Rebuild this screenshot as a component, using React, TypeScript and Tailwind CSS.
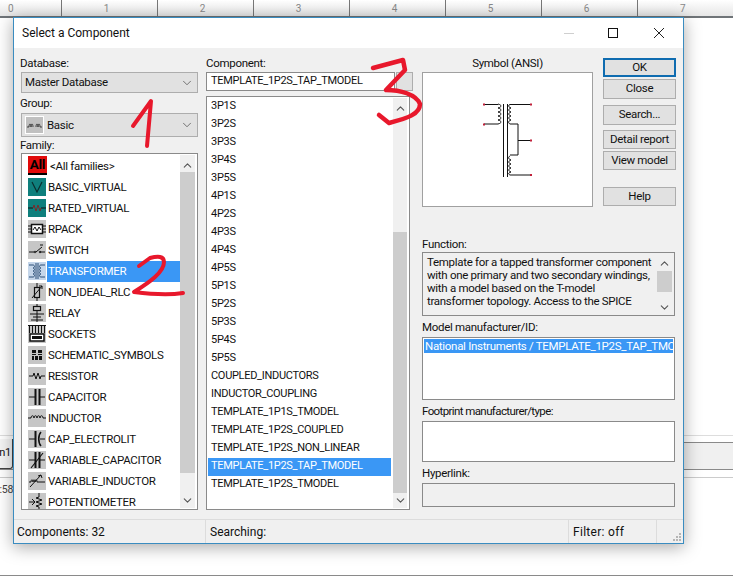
import React from "react";
import { ChevronDown, ChevronUp } from "lucide-react";

const S = { fontFamily: 'Roboto, "Noto Sans", sans-serif' };

function Scroll({ w = 15, thumbTop, thumbH, h }: { w?: number; thumbTop: number; thumbH: number; h: number }) {
  return (
    <div className="relative shrink-0 bg-[#f0f0f0]" style={{ width: w, height: h }}>
      <div className="absolute left-0 top-[3px] flex h-[14px] w-full items-center justify-center">
        <ChevronUp size={13} strokeWidth={2} className="text-[#555555]" />
      </div>
      <div className="absolute left-0 w-full bg-[#cdcdcd]" style={{ top: thumbTop, height: thumbH }} />
      <div className="absolute bottom-[1px] left-0 flex h-[14px] w-full items-center justify-center">
        <ChevronDown size={13} strokeWidth={2} className="text-[#555555]" />
      </div>
    </div>
  );
}

const st = { fill: "none", stroke: "#111", strokeWidth: 1 };

const Ico: Record<string, React.ReactNode> = {
  basicV: <path d="M4 4 L9 14 L14 4" fill="none" stroke="#0a2f2f" strokeWidth="1.2" />,
  rated: (
    <g fill="none" strokeWidth="1">
      <path d="M0 9 H5 M13 9 H18" stroke="#111" />
      <path d="M5 9 L6 6 L8 12 L10 6 L12 12 L13 9" stroke="#7a2a2a" />
    </g>
  ),
  rpack: (
    <g {...st}>
      <rect x="3.5" y="4.5" width="11" height="9" fill="#fff" strokeWidth="1.5" />
      <path d="M0 6 H3 M0 9 H3 M0 12 H3 M15 6 H18 M15 9 H18 M15 12 H18" />
      <path d="M5 10 L7 7 L9 11 L11 7 L13 10" />
    </g>
  ),
  sw: (
    <g {...st}>
      <path d="M1 11 H6 M12 11 H17 M8 11 L14 6 M12 4 H15" />
      <circle cx="7" cy="11" r="0.8" />
      <circle cx="12" cy="11" r="0.8" />
    </g>
  ),
  trans: (
    <g fill="none" stroke="#2c4f77" strokeWidth="1">
      <path d="M8 1 V17 M10 1 V17" />
      <path d="M1 3 H5 C7 3 7 6 5 6 C7 6 7 9 5 9 C7 9 7 12 5 12 C7 12 7 15 5 15 H1" />
      <path d="M17 3 H13 C11 3 11 6 13 6 C11 6 11 9 13 9 M13 9 C11 9 11 12 13 12 C11 12 11 15 13 15 H17" />
    </g>
  ),
  nonideal: (
    <g {...st}>
      <path d="M9 0 V4 M9 14 V18" />
      <rect x="6.5" y="4.5" width="5" height="10" strokeWidth="1.2" />
      <path d="M4 15 L14 3 M11 3 H14 V6" />
    </g>
  ),
  relay: (
    <g {...st}>
      <rect x="5.5" y="2.5" width="7" height="4" strokeWidth="1.2" />
      <path d="M9 0 V2 M9 7 V10 M2 10 H16 M5 13 H13 M9 10 V18 M3 16 H15" />
    </g>
  ),
  sockets: (
    <g fill="#111">
      <path d="M0 0 H18 V1 H0 Z" />
      <path d="M1 1 h1 v7 h-1 z M4 1 h1 v7 h-1 z M7 1 h1 v7 h-1 z M10 1 h1 v7 h-1 z M13 1 h1 v7 h-1 z M16 1 h1 v7 h-1 z" />
      <rect x="2" y="9" width="14" height="7" fill="#fff" stroke="#111" strokeWidth="1.5" />
      <rect x="4" y="11" width="10" height="3" />
    </g>
  ),
  schem: (
    <g fill="#111">
      <rect x="4" y="4" width="4" height="3" />
      <rect x="10" y="4" width="4" height="3" />
      <rect x="4" y="8" width="4" height="1" />
      <rect x="10" y="8" width="4" height="1" />
      <rect x="4" y="10" width="2" height="4" />
      <rect x="7" y="10" width="3" height="4" />
      <rect x="11" y="10" width="3" height="4" />
    </g>
  ),
  res: <path d="M1 9 H5 L6 6 L8 12 L10 6 L12 12 L13 9 H17" {...st} />,
  cap: (
    <g fill="none" stroke="#111">
      <path d="M1 9 H7 M11 9 H17" />
      <path d="M7.5 1 V17 M11.5 1 V17" strokeWidth="2" />
    </g>
  ),
  ind: <path d="M0 9 H3 C3 6 6 6 6 9 C6 6 9 6 9 9 C9 6 12 6 12 9 C12 6 15 6 15 9 H18" {...st} />,
  cape: (
    <g fill="none" stroke="#111">
      <path d="M1 9 H7 M12 9 H17" />
      <path d="M7.5 1 V17" strokeWidth="2" />
      <path d="M13 2 C10 5 10 13 13 16" strokeWidth="1.6" />
    </g>
  ),
  varc: (
    <g fill="none" stroke="#111">
      <path d="M1 9 H7 M11 9 H17" />
      <path d="M7.5 1 V17 M11.5 1 V17" strokeWidth="2" />
      <path d="M3 17 L15 2" strokeWidth="1.2" />
    </g>
  ),
  vari: (
    <g {...st}>
      <path d="M1 10 H3 C3 7 5 7 5 10 C5 7 7 7 7 10 C7 7 9 7 9 10 H17" />
      <path d="M2 15 L13 3 M10 4 L13 3 L14 6" />
    </g>
  ),
  pot: (
    <g {...st}>
      <path d="M11 0 V4 L8 5 L14 7 L8 9 L14 11 L8 13 L11 14 V18" />
      <path d="M1 9 H7 M4 6 L7 9 L4 12" />
    </g>
  ),
};

const families: [string, string, string?][] = [
  ["BASIC_VIRTUAL", "basicV", "teal"],
  ["RATED_VIRTUAL", "rated", "teal"],
  ["RPACK", "rpack"],
  ["SWITCH", "sw"],
  ["TRANSFORMER", "trans", "sel"],
  ["NON_IDEAL_RLC", "nonideal"],
  ["RELAY", "relay"],
  ["SOCKETS", "sockets"],
  ["SCHEMATIC_SYMBOLS", "schem"],
  ["RESISTOR", "res"],
  ["CAPACITOR", "cap"],
  ["INDUCTOR", "ind"],
  ["CAP_ELECTROLIT", "cape"],
  ["VARIABLE_CAPACITOR", "varc"],
  ["VARIABLE_INDUCTOR", "vari"],
  ["POTENTIOMETER", "pot"],
];

const components = [
  "3P1S", "3P2S", "3P3S", "3P4S", "3P5S", "4P1S", "4P2S", "4P3S", "4P4S", "4P5S",
  "5P1S", "5P2S", "5P3S", "5P4S", "5P5S", "COUPLED_INDUCTORS", "INDUCTOR_COUPLING",
  "TEMPLATE_1P1S_TMODEL", "TEMPLATE_1P2S_COUPLED", "TEMPLATE_1P2S_NON_LINEAR",
  "TEMPLATE_1P2S_TAP_TMODEL", "TEMPLATE_1P2S_TMODEL",
];

function Btn({ children, h, mt, ok }: { children: React.ReactNode; h: number; mt: number; ok?: boolean }) {
  return (
    <div
      className={
        "flex w-[73px] items-center justify-center whitespace-nowrap bg-[#e1e1e1] text-[11.5px] text-[#111] " +
        (ok ? "border-2 border-[#0f6cb0]" : "border border-[#adadad]")
      }
      style={{ height: h, marginTop: mt }}
    >
      {children}
    </div>
  );
}

function Lab({ children, h, low }: { children: React.ReactNode; h: number; low?: boolean }) {
  return (
    <div
      className={"flex items-center whitespace-nowrap text-[11.5px] leading-none text-[#111] " + (low ? "pt-[3px]" : "pt-[1px]")}
      style={{ height: h }}
    >
      {children}
    </div>
  );
}

function Ruler() {
  return (
    <div className="flex h-[16px] bg-gradient-to-b from-white to-[#e6e6e6] tracking-normal">
      <div className="flex h-full w-[62px] shrink-0 items-center border-r border-[#777] pl-[8px] text-[10px] text-[#888]">0</div>
      {["1", "2", "3", "4", "5", "6"].map((d) => (
        <div key={d} className="flex h-full w-[96px] shrink-0 items-center justify-center border-r border-[#777] pr-[6px] text-[10px] text-[#888]">
          {d}
        </div>
      ))}
      <div className="flex h-full flex-1 items-center pl-[42px] text-[10px] text-[#888]">7</div>
    </div>
  );
}

const fnLines = [
  "Template for a tapped transformer component",
  "with one primary and two secondary windings,",
  "with a model based on the T-model",
  "transformer topology. Access to the SPICE",
];

export default function App() {
  return (
    <div className="relative h-[577px] w-[733px] overflow-hidden bg-white tracking-[-0.3px]" style={S}>
      <Ruler />
      <div className="h-[2px] bg-[#6f7478]" />
      <div className="mt-[417px] h-px bg-[#dddddd]" />
      <div className="mt-[6px] flex h-[28px] border-y border-[#8a8a8a] bg-[#f0f0f0]">
        <div className="-mt-[4px] flex h-[30px] w-[13px] items-center justify-end rounded-br-[3px] border-r border-b border-[#444] bg-[#f5f5f5] pr-[1px] text-[11px] text-[#111]">
          n1
        </div>
      </div>
      <div className="mt-[7px] h-px bg-[#cccccc]" />
      <div className="mt-[4px] flex h-[16px] w-[13px] items-center justify-end text-[10.5px] text-[#444]">:58</div>
      <div className="mt-[77px] h-px bg-[#8a8a8a]" />

      {/* dialog */}
      <div className="absolute left-[13px] top-[17px] flex h-[527px] w-[671px] flex-col border border-[#3a8cc0] bg-[#f0f0f0] shadow-[0_3px_16px_rgba(0,0,0,0.35)]">
        <div className="flex h-[30px] shrink-0 items-center bg-white pl-[8px] text-[12px] tracking-normal text-[#111]">
          <span className="flex-1">Select a Component</span>
          <div className="mr-[34px] h-px w-[10px] bg-[#cfcfcf]" />
          <div className="mr-[35px] h-[10px] w-[10px] border border-[#111]" />
          <svg width="12" height="12" viewBox="0 0 12 12" className="mr-[18px]">
            <path d="M1 1 L11 11 M11 1 L1 11" stroke="#222" strokeWidth="1" />
          </svg>
        </div>

        <div className="flex flex-1 pl-[6px] pt-[7px]">
          {/* left */}
          <div className="flex w-[178px] shrink-0 flex-col">
            <Lab h={17}>Database:</Lab>
            <div className="ml-[1px] flex h-[21px] items-center justify-between border border-[#adadad] bg-[#e1e1e1] pl-[3px] pr-[3px] pt-[1px] text-[11.5px] text-[#111]">
              Master Database
              <ChevronDown size={14} strokeWidth={1.2} className="text-[#444]" />
            </div>
            <Lab h={20}>Group:</Lab>
            <div className="ml-[1px] flex h-[24px] items-center border border-[#adadad] bg-[#e1e1e1] pl-[3px] pr-[3px] text-[11.5px] text-[#111]">
              <div className="mr-[3px] flex h-[18px] w-[19px] items-center justify-center border border-white bg-[#c0c0c0]">
                <svg width="15" height="10" viewBox="0 0 15 10">
                  <path d="M0 7 H2 C2 3 4 3 4 7 C4 3 6 3 6 7 M9 7 C9 3 11 3 11 7 C11 3 13 3 13 7 H15" fill="none" stroke="#222" strokeWidth="0.8" />
                </svg>
              </div>
              <span className="flex-1 pt-[2px]">Basic</span>
              <ChevronDown size={14} strokeWidth={1.2} className="text-[#444]" />
            </div>
            <Lab h={16}>Family:</Lab>
            <div className="ml-[1px] flex h-[357px] overflow-hidden border border-[#8a8a8a] bg-white pt-px">
              <div className="h-full w-[158px] shrink-0 overflow-hidden pl-[6px] pt-px">
                <div className="flex h-[21px] items-start text-[11.5px] text-[#111]">
                  <div className="h-[19px] w-[19px] shrink-0 border-b-2 border-black bg-[#e10a0a] text-center text-[13.5px] font-bold leading-[17px] text-black">
                    All
                  </div>
                  <span className="ml-[3px] mt-[1px] leading-[18px]">&lt;All families&gt;</span>
                </div>
                {families.map(([name, ic, kind]) => (
                  <div key={name} className="flex h-[21px] items-start text-[11.5px]">
                    <div className={"mt-px h-[18px] w-[18px] shrink-0 " + (kind === "teal" ? "bg-[#0f7f7c]" : kind === "sel" ? "bg-[#c5d6ea]" : "bg-[#c6c6c6]")}>
                      <svg width="18" height="18" viewBox="0 0 18 18">{Ico[ic]}</svg>
                    </div>
                    <div className={"ml-px flex h-[21px] flex-1 items-center pl-[1px] " + (kind === "sel" ? "bg-[#3a97f5] text-white" : "text-[#111]")}>
                      {name}
                    </div>
                  </div>
                ))}
              </div>
              <Scroll thumbTop={17} thumbH={301} h={353} />
            </div>
          </div>

          {/* middle */}
          <div className="ml-[8px] flex w-[207px] shrink-0 flex-col">
            <Lab h={17}>Component:</Lab>
            <div className="flex h-[19px] gap-px">
              <div className="flex h-full w-[189px] items-center border border-[#8a8a8a] bg-white pl-[4px] text-[11px] text-[#111]">
                TEMPLATE_1P2S_TAP_TMODEL
              </div>
              <div className="h-full w-[17px] border border-[#adadad] bg-[#e1e1e1]" />
            </div>
            <div className="mt-[5px] flex h-[414px] w-[204px] overflow-hidden border border-[#8a8a8a] bg-white pl-px pt-px">
              <div className="h-full w-[183px] shrink-0 overflow-hidden">
                {components.map((c) => (
                  <div
                    key={c}
                    className={
                      "flex h-[18px] items-center pb-[1px] pl-[3px] text-[11px] " +
                      (c === "TEMPLATE_1P2S_TAP_TMODEL" ? "bg-[#3a97f5] text-white" : "text-[#111]")
                    }
                  >
                    {c}
                  </div>
                ))}
              </div>
              <div className="ml-[2px]">
                <Scroll w={14} thumbTop={134} thumbH={261} h={410} />
              </div>
            </div>
          </div>

          {/* right */}
          <div className="ml-[9px] flex w-[254px] shrink-0 flex-col">
            <div className="flex h-[181px] shrink-0">
              <div className="flex w-[171px] shrink-0 flex-col">
                <div className="flex h-[17px] items-center justify-center pt-[1px] text-[11.5px] leading-none text-[#111]">Symbol (ANSI)</div>
                <div className="h-[135px] border border-[#a0a0a0] bg-white">
                  <svg width="169" height="133" viewBox="423 73 169 133">
                    <g fill="none" stroke="#111" strokeWidth="1">
                      <path d="M503.5 104 V177 M507.5 104 V177" />
                      <path d="M484 104.5 H498 M498 104 C502 105 502 107 498 108 C502 109 502 111 498 112 C502 113 502 115 498 116 C502 117 502 119 498 120 C502 121 502 123 498 124 H484" />
                      <path d="M531 104.5 H510 C508 105 508 107 511 108 C508 109 508 111 511 112 C508 113 508 115 511 116 C508 117 508 119 511 120 C508 121 508 123 510 124 H518 V155 H510" />
                      <path d="M518 140.5 H531" />
                      <path d="M510 156 C508 157 508 159 511 160 C508 161 508 163 511 164 C508 165 508 167 511 168 C508 169 508 171 511 172 C508 173 508 174 510 175 H531" />
                    </g>
                    <g fill="#c0203a">
                      <rect x="483" y="103.5" width="2" height="2" />
                      <rect x="483" y="123.5" width="2" height="2" />
                      <rect x="530" y="103.5" width="2" height="2" />
                      <rect x="530" y="139.5" width="2" height="2" />
                      <rect x="530" y="174" width="2" height="2" />
                    </g>
                  </svg>
                </div>
              </div>
              <div className="ml-[10px] flex flex-col">
                <Btn ok h={19} mt={3}>OK</Btn>
                <Btn h={20} mt={2}>Close</Btn>
                <Btn h={20} mt={6}>Search...</Btn>
                <Btn h={19} mt={5}>Detail report</Btn>
                <Btn h={19} mt={2}>View model</Btn>
                <Btn h={19} mt={17}>Help</Btn>
              </div>
            </div>
            <Lab h={16}>Function:</Lab>
            <div className="flex h-[64px] w-[253px] border border-[#8a8a8a] bg-[#f0f0f0]">
              <div className="w-[234px] whitespace-nowrap pl-[4px] pt-[3px] text-[11.5px] leading-[13px] text-[#111]">
                {fnLines.map((l) => (
                  <div key={l}>{l}</div>
                ))}
              </div>
              <Scroll thumbTop={18} thumbH={21} h={62} />
            </div>
            <Lab h={21} low>Model manufacturer/ID:</Lab>
            <div className="h-[63px] w-[253px] overflow-hidden border border-[#8a8a8a] bg-white p-px">
              <div className="h-[14px] overflow-hidden whitespace-nowrap bg-[#3a97f5] pl-px text-[11.5px] leading-[14px] text-white">
                National Instruments / TEMPLATE_1P2S_TAP_TMODEL
              </div>
            </div>
            <Lab h={21} low>
              <span className="tracking-[-0.6px]">Footprint manufacturer/type:</span>
            </Lab>
            <div className="h-[41px] w-[253px] border border-[#8a8a8a] bg-white" />
            <Lab h={21} low>Hyperlink:</Lab>
            <div className="h-[24px] w-[253px] border border-[#8a8a8a] bg-[#f0f0f0]" />
          </div>
        </div>

        {/* status */}
        <div className="flex h-[24px] shrink-0 items-center border-t border-[#dcdcdc] text-[12px] tracking-normal text-[#111]">
          <div className="flex h-full w-[192px] items-center border-r border-[#dcdcdc] pl-[3px]">Components: 32</div>
          <div className="flex h-full w-[363px] items-center border-r border-[#dcdcdc] pl-[4px]">Searching:</div>
          <div className="flex h-full w-[88px] items-center border-r border-[#dcdcdc] pl-[4px] tracking-[0.3px]">Filter: off</div>
          <svg width="12" height="12" viewBox="0 0 12 12" className="ml-auto mt-auto">
            <g fill="#b5b5b5">
              <rect x="8" y="2" width="2" height="2" />
              <rect x="5" y="5" width="2" height="2" />
              <rect x="8" y="5" width="2" height="2" />
              <rect x="2" y="8" width="2" height="2" />
              <rect x="5" y="8" width="2" height="2" />
              <rect x="8" y="8" width="2" height="2" />
            </g>
          </svg>
        </div>
      </div>

      {/* red marks */}
      <svg className="pointer-events-none absolute left-0 top-0" width="733" height="577" viewBox="0 0 733 577">
        <g fill="none" stroke="#e8182c" strokeLinecap="round" strokeLinejoin="round">
          <path d="M133 126 L151 101 L147 146" strokeWidth="4" />
          <path d="M139 266 L150 258 C158 256 164 256 164 262 C164 272 150 282 134 292 C150 294 170 295 183 293" strokeWidth="4" />
          <path d="M373 68 L403 60 L405 70 L386 90 C400 90 416 94 420 104 C420 114 408 118 389 123 L379 115" strokeWidth="4.5" />
        </g>
      </svg>
    </div>
  );
}
